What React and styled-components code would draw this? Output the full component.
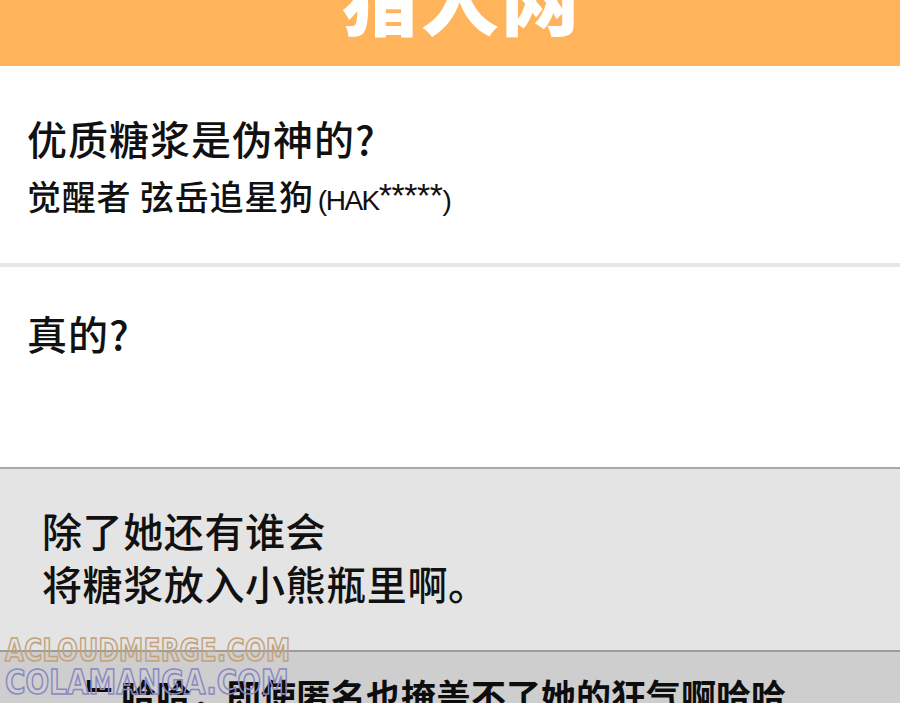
import React from "react";
import styled, { createGlobalStyle } from "styled-components";

const GlobalStyle = createGlobalStyle`
  html, body {
    margin: 0;
    padding: 0;
    background: #ffffff;
  }
  body {
    font-family: "Noto Sans CJK SC", "Noto Sans", sans-serif;
  }
`;

const Page = styled.div`
  position: relative;
  width: 900px;
  height: 703px;
  overflow: hidden;
  display: flex;
  flex-direction: column;
  background: #ffffff;
`;

const Header = styled.div`
  height: 66px;
  flex: none;
  background: #ffb35b;
  display: flex;
  justify-content: center;
  overflow: hidden;
`;

const SiteName = styled.div`
  margin-top: -43px;
  padding-left: 22px;
  font-size: 78px;
  line-height: 78px;
  font-weight: 900;
  color: #ffffff;
  letter-spacing: 2px;
`;

const Card = styled.div`
  height: ${(p) => p.h}px;
  flex: none;
  padding: ${(p) => p.top}px 0 0 27px;
  box-sizing: border-box;
  background: #ffffff;
  color: #111111;
`;

const Divider = styled.div`
  height: ${(p) => p.size}px;
  flex: none;
  background: ${(p) => p.color};
`;

const Title = styled.div`
  font-size: 40px;
  line-height: 48px;
  font-weight: 500;
  letter-spacing: 1px;
`;

const Author = styled.div`
  margin-top: 13px;
  font-size: 34px;
  line-height: 40px;
  font-weight: 500;
  letter-spacing: 0.8px;
`;

const UserId = styled.span`
  font-family: "Liberation Sans", Arial, sans-serif;
  font-size: 28px;
  font-weight: 400;
  letter-spacing: -1.5px;
  margin-left: 4px;
`;

const Stars = styled.span`
  font-size: 34px;
  letter-spacing: -0.5px;
  vertical-align: 3px;
`;

const Reply = styled.div`
  flex: none;
  height: 181px;
  box-sizing: border-box;
  padding: 35px 0 0 42px;
  background: #e4e4e4;
  color: #111111;
`;

const ReplyLine = styled.div`
  font-size: 40px;
  line-height: 53px;
  font-weight: 500;
  letter-spacing: 0.6px;
`;

const NextReply = styled.div`
  flex: 1;
  padding: 22px 0 0 86px;
  background: #cecece;
  color: #0d0d0d;
  font-size: 35px;
  line-height: 42px;
  font-weight: 700;
  white-space: nowrap;
`;

const Watermark = styled.div`
  position: absolute;
  left: 5px;
  top: 632px;
  display: flex;
  flex-direction: column;
  font-family: "DejaVu Sans Condensed", "DejaVu Sans", sans-serif;
  font-weight: 700;
  color: transparent;
  pointer-events: none;
`;

const MarkLine = styled.div`
  font-size: ${(p) => p.size}px;
  line-height: ${(p) => p.lh}px;
  letter-spacing: ${(p) => p.ls}px;
  -webkit-text-stroke: 1.4px ${(p) => p.stroke};
  transform: scaleY(${(p) => p.sy});
  transform-origin: left top;
`;

export default function App() {
  return (
    <>
      <GlobalStyle />
      <Page>
        <Header>
          <SiteName>猎人网</SiteName>
        </Header>
        <Card h={197} top={48}>
          <Title>优质糖浆是伪神的?</Title>
          <Author>
            觉醒者 弦岳追星狗
            <UserId>
              (HAK<Stars>*****</Stars>)
            </UserId>
          </Author>
        </Card>
        <Divider size={4} color="#e6e6e6" />
        <Card h={200} top={42}>
          <Title>真的?</Title>
        </Card>
        <Divider size={2} color="#a8a8a8" />
        <Reply>
          <ReplyLine>除了她还有谁会</ReplyLine>
          <ReplyLine>将糖浆放入小熊瓶里啊。</ReplyLine>
        </Reply>
        <Divider size={2} color="#9c9c9c" />
        <NextReply>﹂哈哈，即使匿名也掩盖不了她的狂气啊哈哈</NextReply>
        <Watermark>
          <MarkLine size={27} lh={31} ls={0.4} stroke="#c2a27c" sy={1.15}>
            ACLOUDMERGE.COM
          </MarkLine>
          <MarkLine size={31} lh={34} ls={0} stroke="#8a88c4" sy={1.1}>
            COLAMANGA.COM
          </MarkLine>
        </Watermark>
      </Page>
    </>
  );
}
